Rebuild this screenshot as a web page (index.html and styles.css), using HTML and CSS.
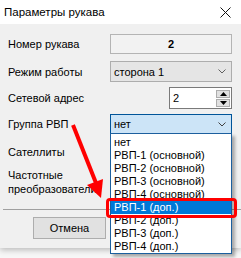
FILE: index.html
```html
<!DOCTYPE html>
<html lang="ru">
<head>
    <meta charset="UTF-8">
    <title>Параметры рукава</title>
    <link rel="stylesheet" href="styles.css">
</head>
<body>
    <div class="dialog">
        <!-- Title bar -->
        <div class="titlebar">
            <span class="title">Параметры рукава</span>
            <svg class="close" width="11" height="11" viewBox="0 0 11 11">
                <path d="M0.5 0.5 L10.5 10.5 M10.5 0.5 L0.5 10.5" stroke="#111" stroke-width="1" fill="none"/>
            </svg>
        </div>

        <!-- Form -->
        <div class="content">
            <div class="row row-num">
                <label class="lbl">Номер рукава</label>
                <div class="field-ro">2</div>
            </div>
            <div class="row row-mode">
                <label class="lbl">Режим работы</label>
                <div class="combo">
                    <span>сторона 1</span>
                    <svg class="chev" width="8" height="5" viewBox="0 0 8 5"><path d="M0.5 0.5 L4 4 L7.5 0.5" stroke="#606060" fill="none"/></svg>
                </div>
            </div>
            <div class="row row-addr">
                <label class="lbl">Сетевой адрес</label>
                <div class="spin">
                    <span class="spin-val">2</span>
                    <div class="spin-btns">
                        <div class="spin-btn"><svg width="7" height="4" viewBox="0 0 7 4"><path d="M0 4 L3.5 0 L7 4 Z" fill="#000"/></svg></div>
                        <div class="spin-btn"><svg width="7" height="4" viewBox="0 0 7 4"><path d="M0 0 L7 0 L3.5 4 Z" fill="#000"/></svg></div>
                    </div>
                </div>
            </div>
            <div class="row row-group">
                <label class="lbl">Группа РВП</label>
                <div class="combo combo-focus">
                    <span>нет</span>
                    <svg class="chev" width="8" height="5" viewBox="0 0 8 5"><path d="M0.5 0.5 L4 4 L7.5 0.5" stroke="#404040" fill="none"/></svg>
                </div>
            </div>
            <div class="lbl lbl-sat">Сателлиты</div>
            <div class="lbl lbl-freq">Частотные<br>преобразователи</div>
        </div>

        <div class="separator"></div>
        <div class="buttons">
            <button class="btn">Отмена</button>
        </div>
    </div>

    <!-- Open drop-down list -->
    <ul class="dropdown">
        <li>нет</li>
        <li>РВП-1 (основной)</li>
        <li>РВП-2 (основной)</li>
        <li>РВП-3 (основной)</li>
        <li>РВП-4 (основной)</li>
        <li class="selected">РВП-1 (доп.)</li>
        <li>РВП-2 (доп.)</li>
        <li>РВП-3 (доп.)</li>
        <li>РВП-4 (доп.)</li>
    </ul>

    <!-- Annotation -->
    <div class="mark"></div>
    <svg class="arrow" width="241" height="258" viewBox="0 0 241 258">
        <line x1="73" y1="125" x2="96" y2="183" stroke="#ff0000" stroke-width="4"/>
        <path d="M87 185 L103 179 L101 198 Z" fill="#ff0000"/>
    </svg>
</body>
</html>
```

FILE: styles.css
```css
body {
    margin: 0;
    width: 241px;
    height: 258px;
    overflow: hidden;
    background: #f7f7f7;
    font-family: "Liberation Sans", Arial, sans-serif;
    font-size: 11px;
    color: #000;
    position: relative;
}
.dialog {
    width: 241px;
    height: 248px;
    background: #f0f0f0;
    box-shadow: 0 2px 6px rgba(0, 0, 0, 0.25);
}
.titlebar {
    height: 24px;
    background: #fff;
    display: flex;
    align-items: center;
    justify-content: space-between;
    padding: 0 10px 0 4px;
}
.title {
    font-size: 11.5px;
}
.content {
    padding: 10px 9px 0 8px;
}
.row {
    display: flex;
    align-items: center;
    justify-content: space-between;
}
.lbl {
    display: block;
}
.row-num .field-ro {
    width: 122px;
    height: 20px;
    box-sizing: border-box;
    border: 1px solid #b4b4b4;
    background: #f2f2f2;
    text-align: center;
    font-weight: bold;
    line-height: 18px;
}
.combo {
    width: 122px;
    box-sizing: border-box;
    display: flex;
    align-items: center;
    justify-content: space-between;
    padding: 0 5px 0 3px;
    border: 1px solid #adadad;
    background: #e5e5e5;
}
.row-mode {
    margin-top: 7px;
}
.row-mode .combo {
    height: 21px;
}
.row-addr {
    margin-top: 5px;
}
.spin {
    width: 63px;
    height: 22px;
    box-sizing: border-box;
    border: 1px solid #7a7a7a;
    background: #fff;
    display: flex;
    align-items: center;
    justify-content: space-between;
    padding: 0 1px 0 3px;
}
.spin-btns {
    display: flex;
    flex-direction: column;
    gap: 1px;
}
.spin-btn {
    width: 14px;
    height: 8px;
    box-sizing: border-box;
    border: 1px solid #adadad;
    background: #e1e1e1;
    display: flex;
    align-items: center;
    justify-content: center;
}
.row-group {
    margin-top: 5px;
}
.combo-focus {
    height: 20px;
    border-color: #005499;
    background: #cce4f7;
}
.lbl-sat {
    margin-top: 11px;
    line-height: 14px;
}
.lbl-freq {
    margin-top: 9px;
    line-height: 14px;
}
.separator {
    margin: 13px 0 0 3px;
    height: 1px;
    background: #a0a0a0;
}
.buttons {
    padding: 7px 0 0 33px;
}
.btn {
    width: 73px;
    height: 22px;
    border: 1px solid #adadad;
    background: #e1e1e1;
    font: inherit;
    padding: 0;
}
.dropdown {
    position: absolute;
    left: 110px;
    top: 133px;
    width: 122px;
    box-sizing: border-box;
    margin: 0;
    padding: 2px 0 0;
    height: 121px;
    list-style: none;
    border: 1px solid #1c5f9e;
    background: #fff;
    box-shadow: 3px 3px 3px rgba(0, 0, 0, 0.3);
}
.dropdown li {
    height: 13px;
    line-height: 13px;
    padding-left: 3px;
}
.dropdown .selected {
    background: #0078d7;
    color: #fff;
}
.mark {
    position: absolute;
    left: 106px;
    top: 198px;
    width: 131px;
    height: 20px;
    box-sizing: border-box;
    border: 3px solid #ff0000;
    border-radius: 4px;
}
.arrow {
    position: absolute;
    left: 0;
    top: 0;
}
```
